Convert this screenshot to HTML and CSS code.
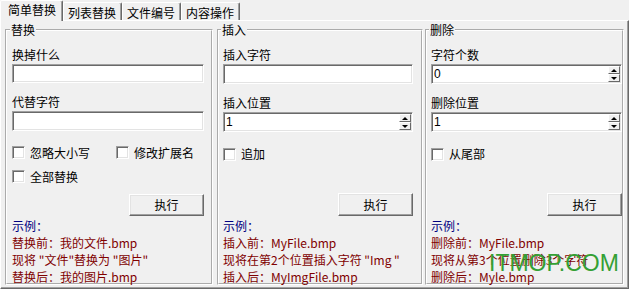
FILE: index.html
```html
<!DOCTYPE html>
<html>
<head>
  <meta charset="utf-8">
  <title>简单替换</title>
  <link rel="stylesheet" href="styles.css">
</head>
<body>
  <!-- Tab strip -->
  <div class="tabs">
    <div class="tab active">简单替换</div>
    <div class="tab">列表替换</div>
    <div class="tab">文件编号</div>
    <div class="tab">内容操作</div>
  </div>

  <div class="panel">
    <!-- 替换 -->
    <fieldset class="group group-replace">
      <legend>替换</legend>
      <label class="field-label">换掉什么</label>
      <input class="text-input" type="text">
      <label class="field-label">代替字符</label>
      <input class="text-input" type="text">
      <div class="checks">
        <div class="check-row">
          <label class="check wide"><input type="checkbox">忽略大小写</label>
          <label class="check"><input type="checkbox">修改扩展名</label>
        </div>
        <div class="check-row">
          <label class="check"><input type="checkbox">全部替换</label>
        </div>
      </div>
      <button class="run-btn">执行</button>
      <div class="example">
        <div class="title">示例：</div>
        <div>替换前：我的文件.bmp</div>
        <div>现将 "文件"替换为 "图片"</div>
        <div>替换后：我的图片.bmp</div>
      </div>
    </fieldset>

    <!-- 插入 -->
    <fieldset class="group group-insert">
      <legend>插入</legend>
      <label class="field-label">插入字符</label>
      <input class="text-input" type="text">
      <label class="field-label">插入位置</label>
      <div class="spin">
        <input type="text" value="1">
        <div class="spin-btns"><span class="spin-btn up"></span><span class="spin-btn down"></span></div>
      </div>
      <div class="checks">
        <div class="check-row">
          <label class="check"><input type="checkbox">追加</label>
        </div>
      </div>
      <button class="run-btn">执行</button>
      <div class="example">
        <div class="title">示例：</div>
        <div>插入前：MyFile.bmp</div>
        <div>现将在第2个位置插入字符 "Img "</div>
        <div>插入后：MyImgFile.bmp</div>
      </div>
    </fieldset>

    <!-- 删除 -->
    <fieldset class="group group-delete">
      <legend>删除</legend>
      <label class="field-label">字符个数</label>
      <div class="spin">
        <input type="text" value="0">
        <div class="spin-btns"><span class="spin-btn up"></span><span class="spin-btn down"></span></div>
      </div>
      <label class="field-label">删除位置</label>
      <div class="spin">
        <input type="text" value="1">
        <div class="spin-btns"><span class="spin-btn up"></span><span class="spin-btn down"></span></div>
      </div>
      <div class="checks">
        <div class="check-row">
          <label class="check"><input type="checkbox">从尾部</label>
        </div>
      </div>
      <button class="run-btn">执行</button>
      <div class="example">
        <div class="title">示例：</div>
        <div>删除前：MyFile.bmp</div>
        <div>现将从第3个位置删除3个字符</div>
        <div>删除后：Myle.bmp</div>
      </div>
    </fieldset>
  </div>

  <div class="watermark">ITMOP.COM</div>
</body>
</html>
```

FILE: styles.css
```css
* {
  box-sizing: border-box;
}

body {
  margin: 0;
  width: 629px;
  height: 289px;
  overflow: hidden;
  position: relative;
  background-color: #f0f0f0;
  color: #000;
  font-family: "Noto Sans CJK SC", "Liberation Sans", sans-serif;
  font-size: 12px;
  line-height: 14px;
}

/* Tab strip */
.tabs {
  display: flex;
  align-items: flex-end;
  height: 20px;
}

.tab {
  height: 18px;
  padding: 3px 5px 0 4px;
  border-top: 1px solid #fff;
  border-left: 1px solid #fff;
  border-right: 1px solid #696969;
  border-radius: 2px 2px 0 0;
  box-shadow: inset -1px 0 #a0a0a0;
  white-space: nowrap;
}

.tab.active {
  height: 21px;
  margin-bottom: -1px;
  padding: 2px 6px 0 7px;
  position: relative;
  z-index: 1;
  background-color: #f0f0f0;
}

/* Tab page */
.panel {
  display: flex;
  height: 269px;
  padding: 2px 4px 3px 4px;
  border: 1px solid;
  border-color: #fff #696969 #696969 #fff;
  box-shadow: inset -1px -1px #a0a0a0;
}

/* Group boxes */
.group {
  display: flex;
  flex-direction: column;
  height: 262px;
  min-width: 0;
  margin: 0;
  border: 2px groove #fff;
}

.group-replace {
  width: 208px;
  margin-right: 4px;
  padding: 11px 7px 0 5px;
}

.group-insert {
  width: 206px;
  margin-right: 2px;
  padding: 11px 8px 0 4px;
}

.group-delete {
  width: 199px;
  padding: 11px 0 0 4px;
}

.group legend {
  margin-left: -2px;
  padding: 0 1px;
  line-height: 14px;
}

.field-label {
  display: block;
  margin-bottom: 2px;
}

/* Sunken edit boxes */
.text-input,
.spin {
  width: 100%;
  height: 20px;
  margin: 0 0 12px;
  background-color: #fff;
  border: 1px solid;
  border-color: #a0a0a0 #fff #fff #a0a0a0;
  box-shadow: inset 1px 1px #696969, inset -1px -1px #e3e3e3;
}

.text-input {
  display: block;
  padding: 0 3px;
  font: inherit;
  outline: none;
}

.spin {
  display: flex;
}

.spin input {
  flex: 1;
  min-width: 0;
  margin: 1px 0 1px 1px;
  padding: 0 1px;
  border: none;
  background: transparent;
  font-family: "Liberation Sans", sans-serif;
  font-size: 12px;
  outline: none;
}

.spin-btns {
  display: flex;
  flex-direction: column;
  width: 12px;
  margin: 1px 1px 1px 0;
}

.spin-btn {
  flex: 1;
  display: flex;
  align-items: center;
  justify-content: center;
  background-color: #f0f0f0;
  border: 1px solid;
  border-color: #fff #696969 #696969 #fff;
}

.spin-btn::before {
  content: "";
  border-left: 3px solid transparent;
  border-right: 3px solid transparent;
}

.spin-btn.up::before {
  border-bottom: 3px solid #000;
}

.spin-btn.down::before {
  border-top: 3px solid #000;
}

/* Check boxes */
.checks {
  margin-top: 3px;
}

.check-row {
  display: flex;
  height: 14px;
  margin-bottom: 10px;
}

.check {
  display: flex;
  align-items: center;
  white-space: nowrap;
}

.check.wide {
  width: 104px;
}

.check input {
  appearance: none;
  width: 13px;
  height: 13px;
  margin: 0 5px 0 0;
  background-color: #fff;
  border: 1px solid;
  border-color: #a0a0a0 #fff #fff #a0a0a0;
  box-shadow: inset 1px 1px #696969, inset -1px -1px #e3e3e3;
}

/* Push button */
.run-btn {
  align-self: flex-end;
  width: 75px;
  height: 23px;
  margin: auto 0 1px;
  padding: 0;
  font: inherit;
  color: #000;
  background-color: #f0f0f0;
  border: 1px solid;
  border-color: #fff #696969 #696969 #fff;
  box-shadow: inset -1px -1px #a0a0a0, inset 1px 1px #e3e3e3;
}

/* Example text */
.example {
  margin-bottom: -2px;
  line-height: 17px;
  color: #800000;
  white-space: nowrap;
}

.example .title {
  color: #000080;
}

/* Site watermark over the screenshot */
.watermark {
  position: absolute;
  left: 489px;
  top: 252px;
  font-family: "Liberation Sans", sans-serif;
  font-size: 23px;
  line-height: 23px;
  color: #34a034;
}
```
